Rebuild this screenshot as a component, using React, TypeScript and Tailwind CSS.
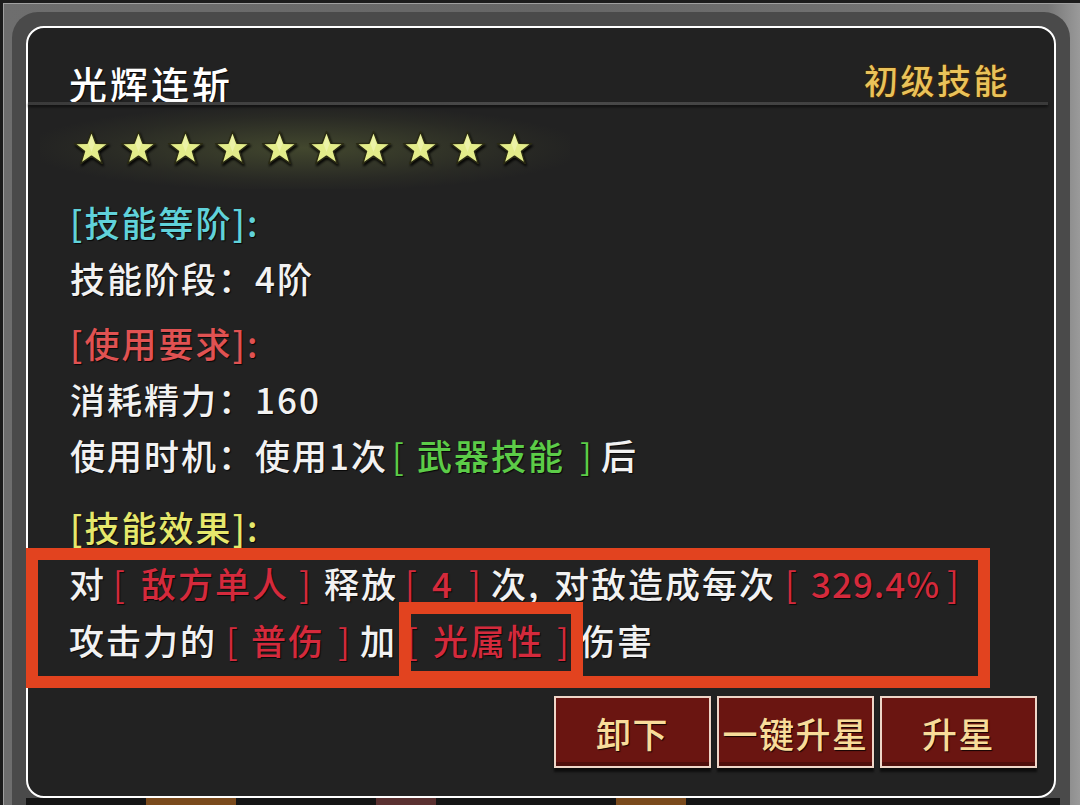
const stars = Array.from({ length: 10 });

function Star() {
  return (
    <svg width="37" height="35" viewBox="0 0 100 95" className="drop-shadow-[1px_2px_1px_rgba(0,0,0,0.9)]">
      <polygon
        points="50,4 62,36 96,37 69,58 79,91 50,71 21,91 31,58 4,37 38,36"
        fill="#e3ec8a"
        stroke="#2a2a14"
        strokeWidth="4"
        strokeLinejoin="round"
      />
      <polygon points="50,12 58,38 50,60 42,38" fill="#f4f8c0" opacity="0.55" />
    </svg>
  );
}

function Btn({ label }: { label: string }) {
  return (
    <div className="w-[157px] h-[72px] bg-[#6a1511] border-2 border-[#efd6c8] shadow-[inset_0_-4px_0_rgba(0,0,0,0.25),0_4px_2px_rgba(0,0,0,0.6)] flex items-center justify-center text-[35px] leading-none font-medium text-[#f8dc9a] tracking-[1.5px]">
      {label}
    </div>
  );
}

type Tok = { t: string; w?: number; c?: string };

// each token gets a fixed slot so the glyphs land where the game's font puts them
function Line({ toks, className }: { toks: Tok[]; className?: string }) {
  return (
    <div className={`flex whitespace-nowrap ${className ?? ""}`}>
      {toks.map((k, i) => (
        <span key={i} className={`shrink-0 ${k.c ?? ""}`} style={k.w ? { width: k.w } : undefined}>
          {k.t}
        </span>
      ))}
    </div>
  );
}

const RED = "text-[#d42a3c]";
const BR = "text-[#d42a3c] font-normal";
const GREEN = "text-[#5ccc48]";
const GBR = "text-[#5ccc48] font-normal";

const timing: Tok[] = [
  { t: "使用时机：", w: 185 },
  { t: "使用1次", w: 137 },
  { t: "[", w: 25, c: GBR },
  { t: "武器技能", w: 163, c: GREEN },
  { t: "]", w: 21, c: GBR },
  { t: "后" },
];

const line1: Tok[] = [
  { t: "对", w: 44 },
  { t: "[", w: 28, c: BR },
  { t: "敌方单人", w: 158, c: RED },
  { t: "]", w: 25, c: BR },
  { t: "释放", w: 81 },
  { t: "[", w: 27, c: BR },
  { t: "4", w: 37, c: RED },
  { t: "]", w: 22, c: BR },
  { t: "次,", w: 63 },
  { t: "对敌造成每次", w: 231 },
  { t: "[", w: 26, c: BR },
  { t: "329.4%", w: 136, c: RED + " tracking-[1px]" },
  { t: "]", c: BR },
];

const line2: Tok[] = [
  { t: "攻击力的", w: 157 },
  { t: "[", w: 25, c: BR },
  { t: "普伤", w: 87, c: RED },
  { t: "]", w: 22, c: BR },
  { t: "加", w: 46 },
  { t: "[", w: 27, c: BR },
  { t: "光属性", w: 124, c: RED },
  { t: "]", w: 23, c: BR },
  { t: "伤害" },
];

export default function App() {
  return (
    <div className="w-[1080px] h-[805px] overflow-hidden bg-[#1c1c1c] pt-[3px] pl-[3px] font-['Noto_Sans_CJK_SC','Noto_Sans',sans-serif]">
      <div className="h-full bg-[linear-gradient(90deg,#6e6e6e_0%,#666_50%,#777_97%,#9a9a9a_100%)] border-t border-l border-[#a0a0a0] pt-[8px] pl-[8px] pr-[10px]">
        <div className="h-full bg-[#4a4a4a] rounded-t-[26px] pt-[14px] pl-[14px] pr-[10px] flex flex-col">
          <div className="w-[1030px] h-[772px] shrink-0 bg-[#222222] border-2 border-white rounded-[18px] flex flex-col text-[#f2f2f2] [text-shadow:1px_1px_1px_rgba(0,0,0,0.8)]">
            {/* header */}
            <div className="h-[74px] flex items-end justify-between pl-[41px] pr-[44px]">
              <div className="text-[38px] leading-[38px] font-medium tracking-[3px] text-white">光辉连斩</div>
              <div className="pb-[5px] text-[34px] leading-[34px] font-medium tracking-[2.5px] text-[#e9c25a] [text-shadow:1px_1px_0_#3a2508,-1px_0_0_#3a2508,0_-1px_0_#3a2508]">初级技能</div>
            </div>
            <div className="h-[3px] mr-[6px] bg-[linear-gradient(90deg,#3a3a3a,#4a4a4a_50%,#3a3a3a)] shadow-[0_2px_3px_rgba(0,0,0,0.6)]" />

            {/* stars */}
            <div className="mt-[2px] ml-[12px] w-[530px] h-[82px] bg-[radial-gradient(ellipse_at_center,rgba(88,96,54,0.6)_0%,rgba(52,54,40,0.38)_55%,rgba(34,34,34,0)_75%)] flex items-center gap-[10px] pl-[33px] pb-[2px]">
              {stars.map((_, i) => (
                <Star key={i} />
              ))}
            </div>

            {/* body */}
            <div className="pl-[42px] text-[35px] font-medium tracking-[2px]">
              <div className="mt-[5px] leading-[56px] text-[#60d2da]">[技能等阶]:</div>
              <div className="leading-[56px]">技能阶段：4阶</div>
              <div className="mt-[9px] leading-[56px] text-[#e05252]">[使用要求]:</div>
              <div className="leading-[56px]">消耗精力：160</div>
              <Line toks={timing} className="leading-[56px]" />
              <div className="mt-[25px] leading-[38px] text-[#e6e86c]">[技能效果]:</div>
            </div>

            {/* highlighted effect */}
            <div className="relative mt-[2px] -ml-[2px] w-[964px] border-[12px] border-[#e2431f] pb-[13px] pl-[31px] text-[35px] font-medium tracking-[2px]">
              <Line toks={line1} className="leading-[46px]" />
              <Line toks={line2} className="mt-[11px] leading-[46px]" />
              <div className="absolute left-[361px] top-[42px] w-[184px] h-[81px] border-[12px] border-[#e2431f]" />
            </div>

            {/* buttons */}
            <div className="mt-[8px] flex justify-end gap-[6px] pr-[17px]">
              <Btn label="卸下" />
              <Btn label="一键升星" />
              <Btn label="升星" />
            </div>
          </div>
          <div className="flex-1 bg-[#141414] relative">
            <div className="absolute left-[120px] top-0 w-[90px] h-full bg-[#7a4a1c]" />
            <div className="absolute left-[350px] top-0 w-[60px] h-full bg-[#5a3030]" />
            <div className="absolute left-[590px] top-0 w-[70px] h-full bg-[#7a4a1c]" />
          </div>
        </div>
      </div>
    </div>
  );
}
